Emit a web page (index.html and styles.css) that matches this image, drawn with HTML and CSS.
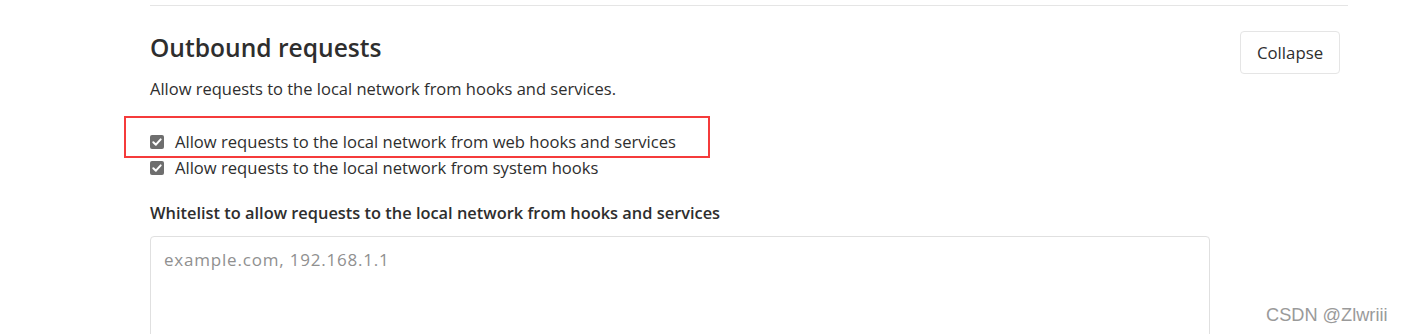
FILE: index.html
```html
<!DOCTYPE html>
<html>
<head>
<meta charset="utf-8">
<link rel="stylesheet" href="styles.css">
</head>
<body>
<div class="page">
  <section class="settings">
    <div class="header">
      <div class="titles">
        <h4 class="title">Outbound requests</h4>
        <p class="desc">Allow requests to the local network from hooks and services.</p>
      </div>
      <button class="btn">Collapse</button>
    </div>
    <div class="body">
      <div class="checks">
        <label class="check highlight"><span class="box"><svg viewBox="0 0 14 14" width="14" height="14"><path d="M3.3 7.2 L5.9 9.7 L10.7 4.4" fill="none" stroke="#fff" stroke-width="2" stroke-linecap="round" stroke-linejoin="round"/></svg></span>Allow requests to the local network from web hooks and services</label>
        <label class="check"><span class="box"><svg viewBox="0 0 14 14" width="14" height="14"><path d="M3.3 7.2 L5.9 9.7 L10.7 4.4" fill="none" stroke="#fff" stroke-width="2" stroke-linecap="round" stroke-linejoin="round"/></svg></span>Allow requests to the local network from system hooks</label>
      </div>
      <div class="field">
        <div class="label">Whitelist to allow requests to the local network from hooks and services</div>
        <div class="textarea"><span class="placeholder">example.com, 192.168.1.1</span></div>
      </div>
    </div>
  </section>
</div>
<div class="watermark">CSDN @Zlwriii</div>
</body>
</html>
```

FILE: styles.css
```css
html, body {
  margin: 0;
  padding: 0;
  background: #fff;
}
body {
  font-family: "Open Sans", "Noto Sans", sans-serif;
  color: #2e2e2e;
  height: 334px;
  overflow: hidden;
  position: relative;
}
.page {
  padding: 0 53px 0 150px;
}
.settings {
  border-top: 1px solid #e5e5e5;
  margin-top: 5px;
}
.header {
  display: flex;
  justify-content: space-between;
  align-items: flex-start;
  padding-top: 25px;
  padding-right: 8px;
}
.title {
  margin: 0;
  font-size: 24.6px;
  font-weight: 600;
  line-height: 34px;
  color: #2e2e2e;
}
.desc {
  margin: 12px 0 0;
  font-size: 16.5px;
  line-height: 24px;
}
.btn {
  margin-top: 0;
  height: 43px;
  width: 100px;
  background: #fff;
  border: 1px solid #e5e5e5;
  border-radius: 4px;
  font-family: inherit;
  font-size: 16.8px;
  color: #2e2e2e;
  padding: 0;
}
.body {
  padding-top: 28px;
}
.checks {
  display: flex;
  flex-direction: column;
}
.check {
  display: flex;
  align-items: center;
  gap: 11px;
  font-size: 16.6px;
  line-height: 26px;
  position: relative;
}
.highlight::after {
  content: "";
  position: absolute;
  left: -26px;
  top: -13px;
  width: 582px;
  height: 38px;
  border: 2px solid #f53b3b;
}
.box {
  width: 14px;
  height: 14px;
  border-radius: 2px;
  background: #6e6e6e;
  display: block;
  flex: none;
}
.box svg { display: block; }
.field {
  margin-top: 20px;
}
.label {
  font-size: 16.4px;
  font-weight: 600;
  line-height: 24px;
}
.textarea {
  margin-top: 11px;
  width: 1060px;
  height: 120px;
  border: 1px solid #e0e0e0;
  border-radius: 4px;
  padding: 11px 13px;
  box-sizing: border-box;
}
.placeholder {
  font-size: 17px;
  letter-spacing: 0.8px;
  color: #909090;
  line-height: 24px;
}
.watermark {
  position: absolute;
  left: 1266px;
  top: 305px;
  font-family: "Liberation Sans", Arial, sans-serif;
  font-size: 18.2px;
  color: #9a9a9a;
}
```
